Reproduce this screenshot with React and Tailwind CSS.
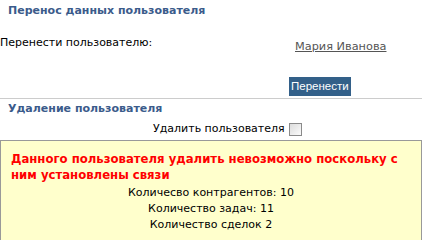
import React from 'react';

const font = { fontFamily: '"DejaVu Sans", Verdana, sans-serif' };

const App = () => {
  return (
    <div className="w-[422px] h-[240px] bg-white overflow-hidden text-[11px] text-black" style={font}>
      <h3 className="pl-2 pt-[3px] h-[18px] font-bold text-[11px] text-[#3b5b8b]">Перенос данных пользователя</h3>

      <div className="flex border-b border-[#cccccc] h-[81px]">
        <div className="w-[289px] pt-[17px] leading-[15px]">Перенести пользователю:</div>
        <div className="flex flex-col items-start">
          <a href="#" className="ml-[6px] mt-[21px] leading-[15px] text-[11.3px] text-[#555555] underline">Мария Иванова</a>
          <button
            className="mt-[23px] h-[19px] px-[2px] bg-[#336089] text-white text-[11.5px] leading-[19px]"
            style={{ fontFamily: '"Liberation Sans", Arial, sans-serif' }}
          >
            Перенести
          </button>
        </div>
      </div>

      <h3 className="pl-2 pt-[2px] h-[20px] font-bold text-[11px] text-[#3b5b8b]">Удаление пользователя</h3>

      <div className="flex items-center pl-[153px] h-[20px]">
        <span>Удалить пользователя</span>
        <span className="ml-[4px] w-[13px] h-[13px] border border-[#8a8a8a] bg-gradient-to-br from-[#dcdcdc] to-[#fbfbfb]"></span>
      </div>

      <div className="mt-[1px] h-[102px] border border-[#999999] bg-[#ffffcc] pt-[10px]">
        <p className="pl-[10px] pr-2 font-bold text-[11.7px] leading-[16px] text-[#ff0000]">
          Данного пользователя удалить невозможно поскольку с ним установлены связи
        </p>
        <div className="mt-[2px] text-center leading-[16px]">
          <p>Количесво контрагентов: 10</p>
          <p>Количество задач: 11</p>
          <p>Количество сделок 2</p>
        </div>
      </div>
    </div>
  );
};

export default App;
